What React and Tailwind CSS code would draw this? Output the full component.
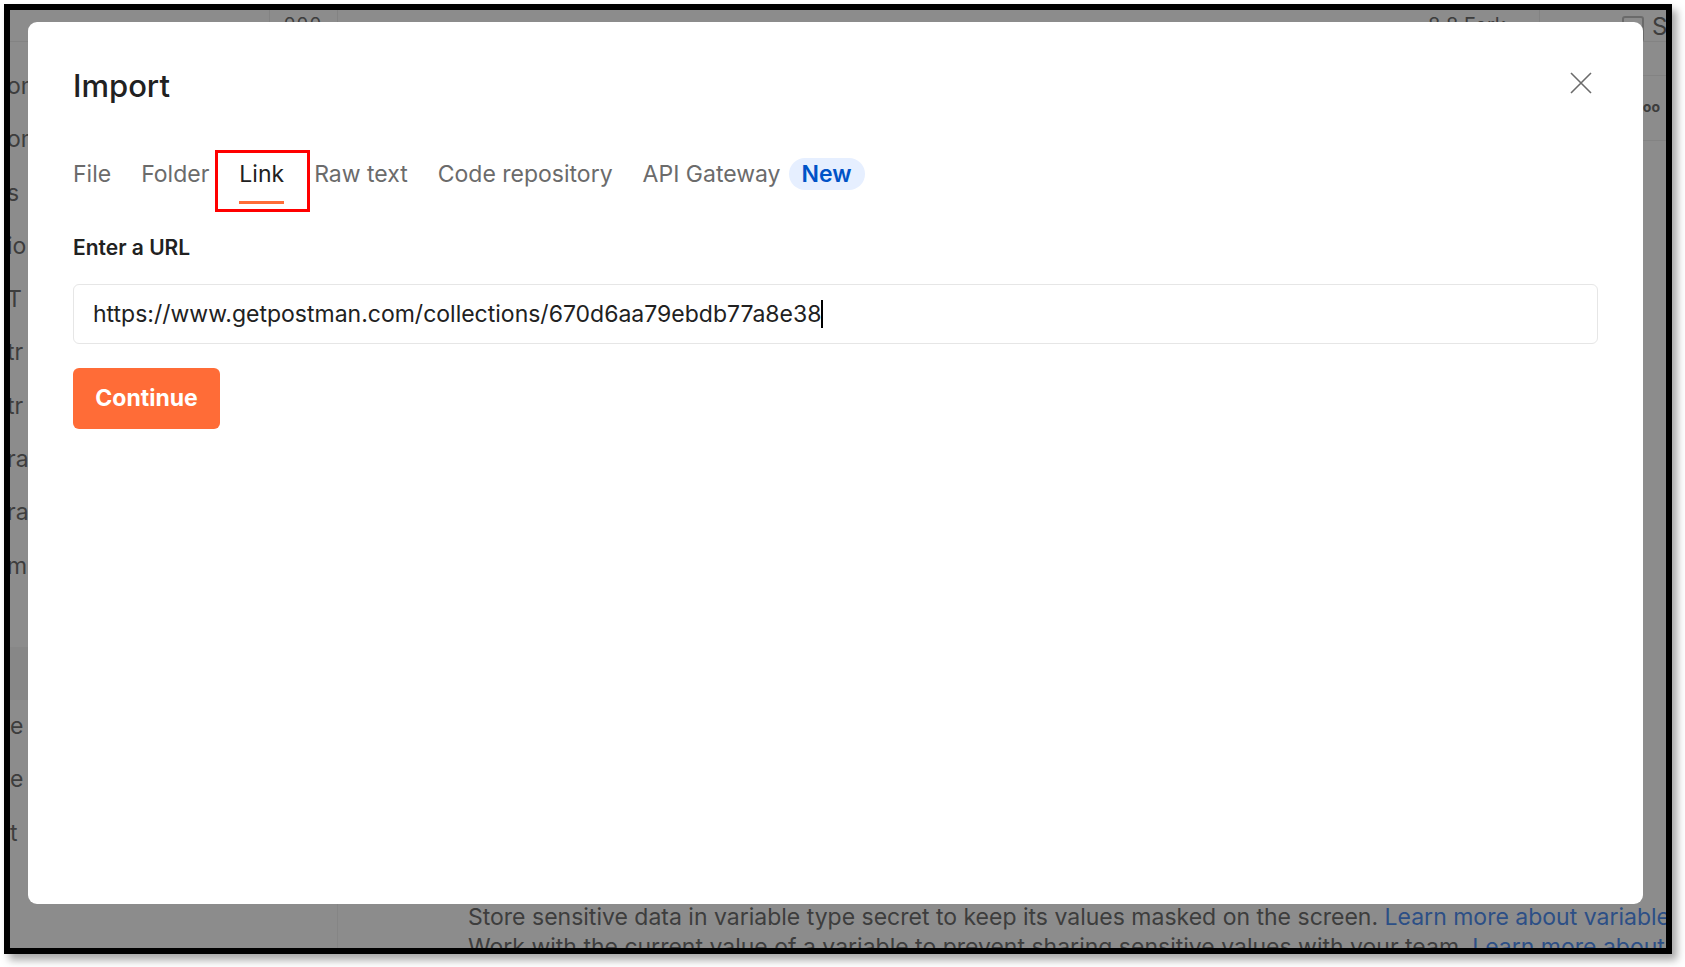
const sideBits = ['om', 'om', 's', 'io', 'T', 'tr', 'tr', 'ra', 'ra', 'm']
const sideBitsLow = ['e', 'e', 't']
const tabs = ['File', 'Folder', 'Link', 'Raw text', 'Code repository', 'API Gateway']

function Backdrop() {
  return (
    <div className="absolute inset-0 flex flex-col text-[#3d3d3d]">
      {/* top bar */}
      <div className="h-[32px] shrink-0 flex border-b border-[#838383]">
        <div className="w-[260px] border-r border-[#838383]" />
        <div className="w-[68px] border-r border-[#838383] flex justify-center pt-[2px] text-[18px] leading-none tracking-[2px]">ooo</div>
        <div className="flex-1" />
        <div className="w-[111px] flex items-start gap-2 pt-[6px] text-[20px] leading-[18px]">8 8 Fork</div>
        <div className="w-[127px] border-l border-[#838383] pl-[82px] flex items-start gap-2 text-[24px] leading-[34px]">
          <span className="w-[22px] h-[26px] mt-[6px] border-2 border-[#6a6a6a] rounded-[3px] shrink-0" />
          <span>S</span>
        </div>
      </div>
      <div className="flex-1 flex">
        {/* left sidebar fragments */}
        <div className="w-[260px] flex flex-col">
          <div className="flex flex-col pt-[18px] text-[23px] leading-[53.3px] -ml-[3px]">
            {sideBits.map((b, i) => (
              <div key={i}>{b}</div>
            ))}
          </div>
          <div className="h-[53px] bg-[#878787] mt-[54px]" />
          <div className="flex flex-col text-[23px] leading-[53.3px]">
            {sideBitsLow.map((b, i) => (
              <div key={i}>{b}</div>
            ))}
          </div>
        </div>
        <div className="w-[68px] border-r border-[#858585]" />
        <div className="flex-1 flex flex-col justify-end pl-[130px] text-[23px] leading-[30px] whitespace-nowrap overflow-hidden">
          <div>
            Store sensitive data in variable type secret to keep its values masked on the screen.{' '}
            <span className="text-[#2c4f86]">Learn more about variables</span>
          </div>
          <div className="-mb-[14px]">
            Work with the current value of a variable to prevent sharing sensitive values with your team.{' '}
            <span className="text-[#2c4f86]">Learn more about</span>
          </div>
        </div>
      </div>
      <div className="absolute right-[6px] top-[86px] text-[14px] font-bold">oo</div>
      <div className="absolute right-0 top-[65px] w-[30px] border-t border-[#838383]" />
      <div className="absolute right-0 top-[130px] w-[30px] border-t border-[#838383]" />
    </div>
  )
}

export default function App() {
  return (
    <div className="w-[1685px] h-[967px] bg-white pl-[4px] pt-[4px] font-['Inter',sans-serif]">
      <div className="w-[1668px] h-[950px] border-[6px] border-black shadow-[5px_6px_8px_rgba(0,0,0,0.35)]">
        <div className="relative w-full h-full bg-[#8c8c8c] overflow-hidden">
          <Backdrop />

          <div className="absolute left-[18px] top-[12px] w-[1615px] h-[882px] bg-white rounded-[9px] px-[45px] pt-[46px]">
            <div className="flex items-center justify-between h-[36px]">
              <h1 className="text-[31px] font-medium text-[#212121] leading-[36px]">Import</h1>
              <svg width="22" height="22" viewBox="0 0 22 22" className="mr-[6px] -mt-[6px]" fill="none" stroke="#6b6b6b" strokeWidth="1.6">
                <path d="M1 1L21 21M21 1L1 21" />
              </svg>
            </div>

            <div className="flex items-center gap-[30px] mt-[56px]">
              {tabs.map((t) => (
                <div key={t} className="relative">
                  <span
                    className={
                      t === 'Link'
                        ? 'block text-[23px] leading-[28px] pb-[13px] border-b-[3px] border-[#ff6c37] text-[#212121]'
                        : 'block text-[23px] leading-[28px] pb-[13px] border-b-[3px] border-transparent text-[#6b6b6b]'
                    }
                  >
                    {t}
                  </span>
                  {t === 'Link' && (
                    <div className="absolute -left-[24px] -right-[26px] -top-[10px] -bottom-[8px] border-[3px] border-[#ff0000]" />
                  )}
                </div>
              ))}
              <span className="-ml-[22px] -mt-[16px] h-[32px] px-[13px] rounded-full bg-[#e6efff] text-[#0053c7] text-[23px] font-semibold leading-[32px]">
                New
              </span>
            </div>

            <div className="mt-[30px] text-[21px] font-semibold text-[#212121] leading-[28px]">Enter a URL</div>

            <div className="mt-[22px] h-[60px] rounded-[6px] border border-[#e6e6e6] flex items-center px-[19px] text-[23px] text-[#212121]">
              <span>https://www.getpostman.com/collections/670d6aa79ebdb77a8e38</span>
              <span className="inline-block w-[2px] h-[28px] bg-black" />
            </div>

            <button className="mt-[24px] h-[61px] w-[147px] rounded-[6px] bg-[#ff6c37] text-white text-[23px] font-bold">
              Continue
            </button>
          </div>
        </div>
      </div>
    </div>
  )
}
